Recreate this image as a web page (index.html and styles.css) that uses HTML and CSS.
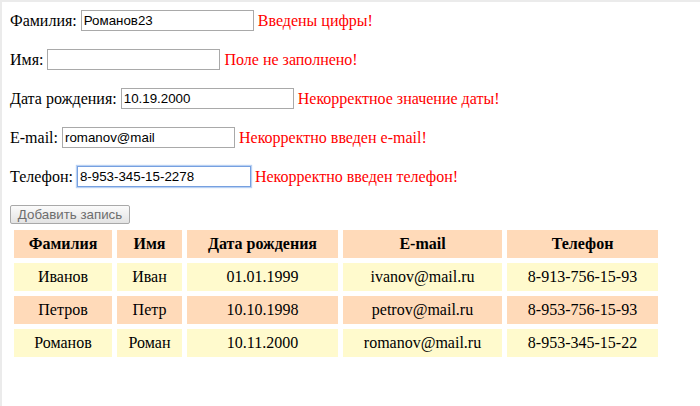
FILE: index.html
```html
<!DOCTYPE html>
<html lang="ru">
<head>
<meta charset="utf-8">
<title>Записи</title>
<link rel="stylesheet" href="styles.css">
</head>
<body>
<div class="page">
  <div class="field"><span class="lbl">Фамилия:</span><input class="inp" type="text" value="Романов23"><span class="err">Введены цифры!</span></div>
  <div class="field"><span class="lbl">Имя:</span><input class="inp" type="text" value=""><span class="err">Поле не заполнено!</span></div>
  <div class="field"><span class="lbl">Дата рождения:</span><input class="inp" type="text" value="10.19.2000"><span class="err">Некорректное значение даты!</span></div>
  <div class="field"><span class="lbl">E-mail:</span><input class="inp" type="text" value="romanov@mail"><span class="err">Некорректно введен e-mail!</span></div>
  <div class="field"><span class="lbl">Телефон:</span><input class="inp focused" type="text" value="8-953-345-15-2278"><span class="err">Некорректно введен телефон!</span></div>
  <div class="actions"><button class="btn" type="button" disabled>Добавить запись</button></div>
  <table class="records">
    <thead>
      <tr><th class="c-surname">Фамилия</th><th class="c-name">Имя</th><th class="c-date">Дата рождения</th><th class="c-mail">E-mail</th><th class="c-phone">Телефон</th></tr>
    </thead>
    <tbody>
      <tr class="odd"><td>Иванов</td><td>Иван</td><td>01.01.1999</td><td>ivanov@mail.ru</td><td>8-913-756-15-93</td></tr>
      <tr class="even"><td>Петров</td><td>Петр</td><td>10.10.1998</td><td>petrov@mail.ru</td><td>8-953-756-15-93</td></tr>
      <tr class="odd"><td>Романов</td><td>Роман</td><td>10.11.2000</td><td>romanov@mail.ru</td><td>8-953-345-15-22</td></tr>
    </tbody>
  </table>
</div>
</body>
</html>
```
FILE: styles.css
```css
html, body {
  margin: 0;
  padding: 0;
  background: #fff;
}
.page {
  box-sizing: border-box;
  min-height: 100vh;
  width: 700px;
  border-top: 2px solid #ebebeb;
  border-left: 2px solid #ebebeb;
  padding: 8px;
  font-family: "Liberation Serif", Tinos, "Times New Roman", Times, "DejaVu Serif", serif;
  font-size: 16px;
  color: #000;
}
.field {
  display: flex;
  align-items: center;
  height: 21px;
  margin-bottom: 18px;
}
.lbl {
  margin-right: 4px;
}
.err {
  margin-left: 4px;
  color: #ff0000;
}
.inp {
  box-sizing: border-box;
  width: 173px;
  height: 21px;
  margin: 0;
  padding: 1px 2px;
  border: 1px solid #a9a9a9;
  font-family: "Liberation Sans", Arial, sans-serif;
  font-size: 13.33px;
  color: #000;
  background: #fff;
  outline: none;
}
.focused {
  width: 174px;
  border-color: #76a0e0;
  box-shadow: 0 0 1px 1px #b9d1f3;
}
.actions {
  height: 20px;
  margin-top: 1px;
}
.btn {
  box-sizing: border-box;
  width: 120px;
  height: 19px;
  margin: 0;
  padding: 0 6px;
  border: 1px solid #a9a9a9;
  border-radius: 2px;
  background: linear-gradient(#fbfbfb, #e3e3e3);
  font-family: "Liberation Sans", Arial, sans-serif;
  font-size: 13.33px;
  color: #6d6d6d;
}
.records {
  border-spacing: 5px;
  margin-left: -1px;
  font-family: "Liberation Serif", Tinos, "Times New Roman", Times, "DejaVu Serif", serif;
}
.records th,
.records td {
  padding: 5px;
  text-align: center;
  font-size: 16px;
  line-height: 18px;
}
.records th {
  background: #ffdab9;
  font-weight: bold;
}
.c-surname { width: 88px; }
.c-name { width: 55px; }
.c-date { width: 141px; }
.c-mail { width: 149px; }
.c-phone { width: 141px; }
.odd td {
  background: #fffacd;
}
.even td {
  background: #ffdab9;
}
```
